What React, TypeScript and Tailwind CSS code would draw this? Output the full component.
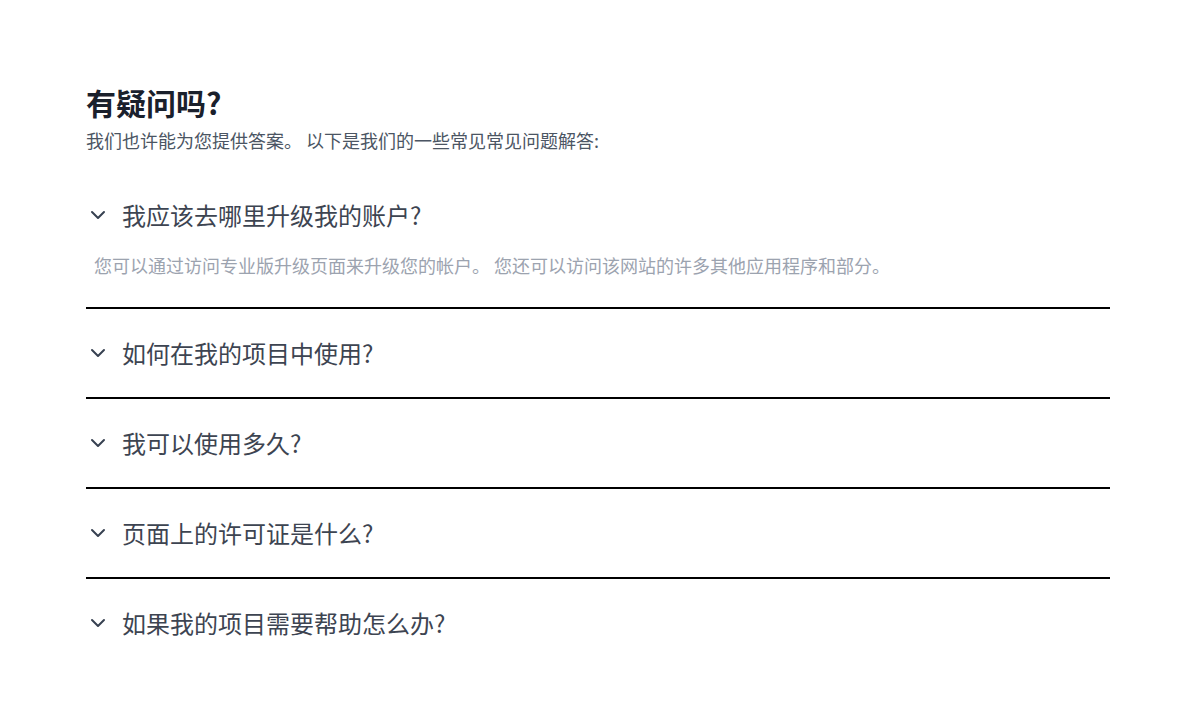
import React from "react";
import { ChevronDown } from "lucide-react";

const items = [
  { q: "我应该去哪里升级我的账户?", a: "您可以通过访问专业版升级页面来升级您的帐户。 您还可以访问该网站的许多其他应用程序和部分。", open: true },
  { q: "如何在我的项目中使用?" },
  { q: "我可以使用多久?" },
  { q: "页面上的许可证是什么?" },
  { q: "如果我的项目需要帮助怎么办?" },
];

export default function App() {
  return (
    <div
      className="min-h-[707px] w-full bg-white"
      style={{ fontFamily: '"Noto Sans CJK SC", "Noto Sans", sans-serif' }}
    >
      <div className="ml-[86px] w-[1024px] pt-[84px]">
        <h2 className="text-[30px] leading-[36px] font-bold text-[#1a202c]">有疑问吗?</h2>
        <p className="mt-1.5 text-[18px] leading-[28px] text-[#4b5563]">
          我们也许能为您提供答案。 以下是我们的一些常见常见问题解答:
        </p>
        <div className="mt-[17px]">
          {items.map((it, i) => (
            <div key={i} className={i < items.length - 1 ? "border-b-2 border-black" : ""}>
              <button className={"flex w-full items-center gap-3 text-left " + (it.open ? "pt-7 pb-5" : "py-7")}>
                <ChevronDown size={24} strokeWidth={2} className="text-[#374151]" />
                <span className="text-[24px] leading-[32px] text-[#3d4451]">{it.q}</span>
              </button>
              {it.open && (
                <p className="pl-2 pb-[28px] text-[18px] leading-[28px] text-[#9ca3af]">{it.a}</p>
              )}
            </div>
          ))}
        </div>
      </div>
    </div>
  );
}
